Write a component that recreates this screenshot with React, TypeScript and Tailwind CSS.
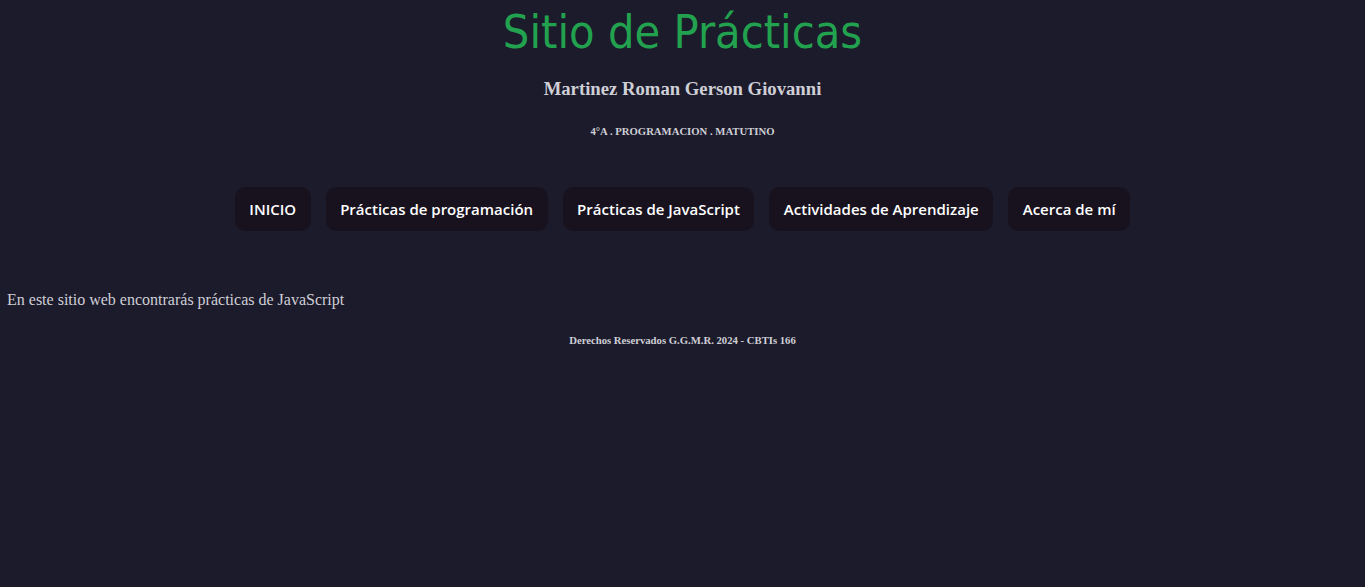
const links = [
  "INICIO",
  "Prácticas de programación",
  "Prácticas de JavaScript",
  "Actividades de Aprendizaje",
  "Acerca de mí",
];

export default function App() {
  return (
    <div className="min-h-[587px] bg-[#1c1b2b] font-['Liberation_Serif',serif] text-[#cfcfd6]">
      <header className="flex flex-col items-center text-center">
        <h1 className="pt-[2px] font-['DejaVu_Sans_Condensed','DejaVu_Sans',sans-serif] text-[46.5px] leading-[60px] text-[#22a24f]">
          Sitio de Prácticas
        </h1>
        <h3 className="mt-[16px] text-[18.7px] font-bold leading-[22px]">Martinez Roman Gerson Giovanni</h3>
        <h6 className="mt-[25px] text-[10.7px] font-bold leading-[13px]">4°A . PROGRAMACION . MATUTINO</h6>
      </header>

      <nav className="mt-[49px] flex justify-center gap-[15px]">
        {links.map((l) => (
          <a
            key={l}
            href="#"
            className="flex h-[44px] items-center rounded-[10px] bg-[#18121e] px-[14.5px] font-['Open_Sans',sans-serif] text-[15px] font-semibold text-white"
          >
            {l}
          </a>
        ))}
      </nav>

      <main className="mt-[59px] px-[7px]">
        <p className="text-[16px] leading-[20px]">En este sitio web encontrarás prácticas de JavaScript</p>
      </main>

      <footer className="mt-[24px] text-center">
        <h6 className="text-[10.7px] font-bold leading-[13px]">Derechos Reservados G.G.M.R. 2024 - CBTIs 166</h6>
      </footer>
    </div>
  );
}
